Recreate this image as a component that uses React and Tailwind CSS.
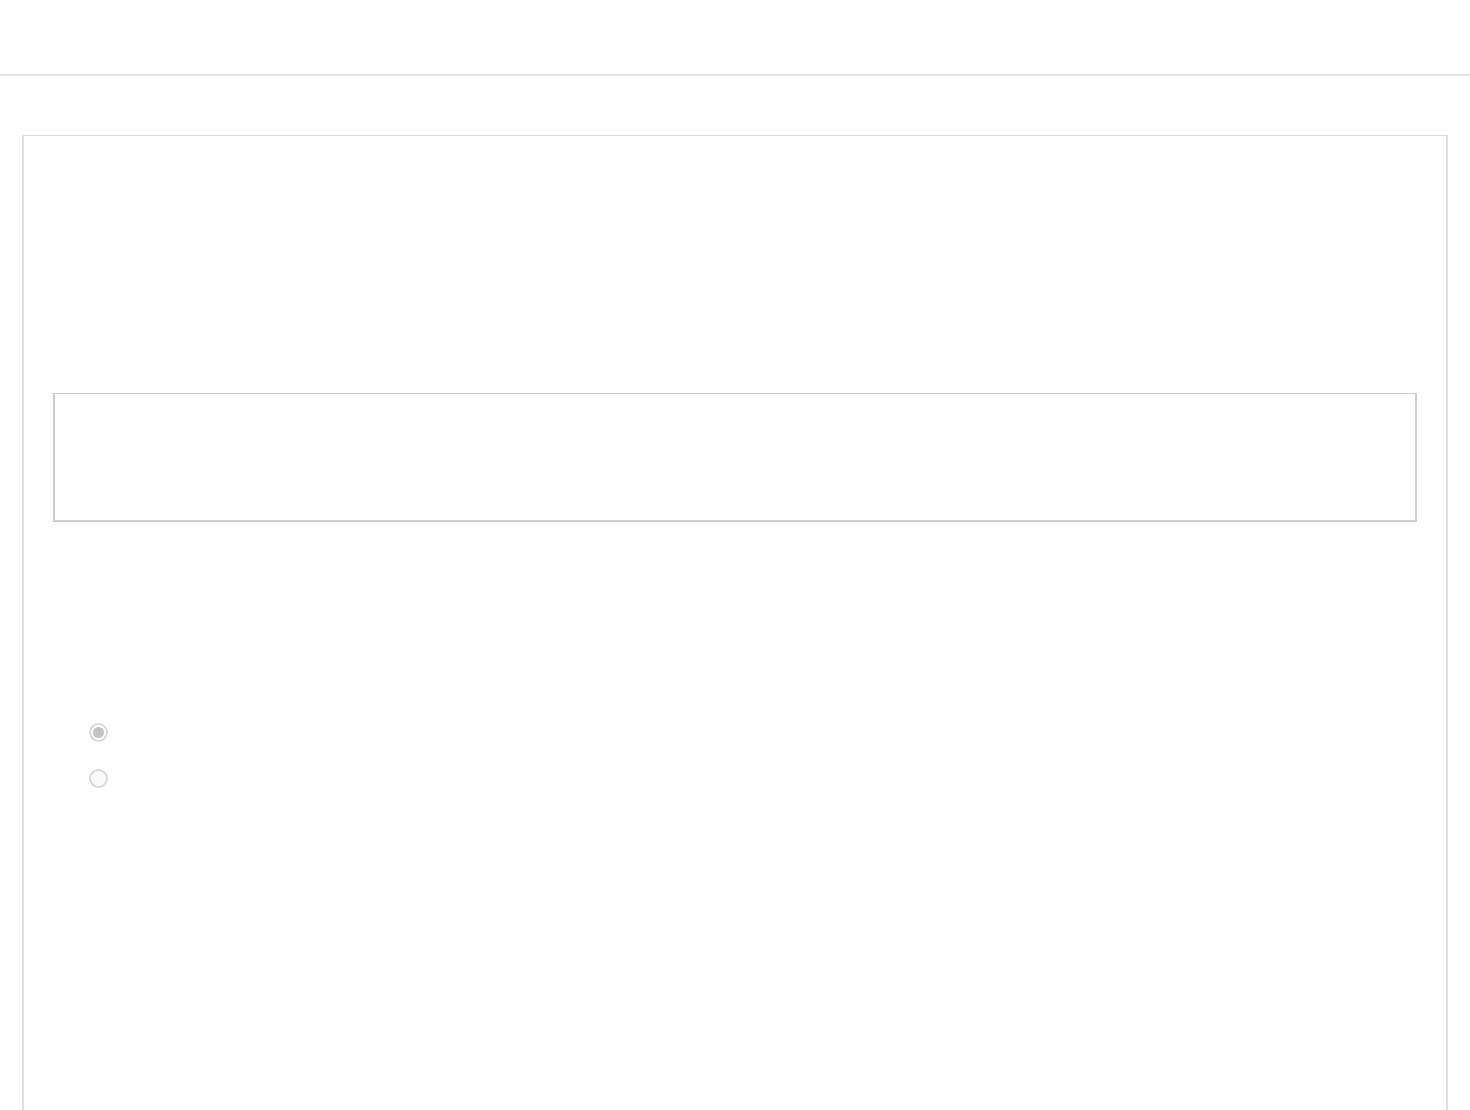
export default function App() {
  return (
    <div className="min-h-[1110px] bg-white font-['Liberation_Sans',sans-serif]">
      {/* Header */}
      <header className="h-[76px] border-b-2 border-[#e6e2e2]"></header>

      {/* Card */}
      <div className="mx-[22px] mt-[59px] h-[980px] border-x-2 border-t border-[#dedede] px-[29px] pt-[257px]">
        <textarea
          className="block h-[129px] w-full resize-none border-x-2 border-t border-b-2 border-[#c9cdd5] bg-white outline-none"
          disabled
        ></textarea>

        <div className="mt-[201px] flex flex-col gap-[27px] pl-[36px]">
          <label className="flex items-center gap-2">
            <span className="flex h-[19px] w-[19px] items-center justify-center rounded-full border-2 border-[#d9d9d9] bg-white">
              <span className="h-[11px] w-[11px] rounded-full bg-[#c2c2c2]"></span>
            </span>
          </label>
          <label className="flex items-center gap-2">
            <span className="h-[19px] w-[19px] rounded-full border-2 border-[#d9d9d9] bg-[#fafafa]"></span>
          </label>
        </div>
      </div>
    </div>
  );
}
